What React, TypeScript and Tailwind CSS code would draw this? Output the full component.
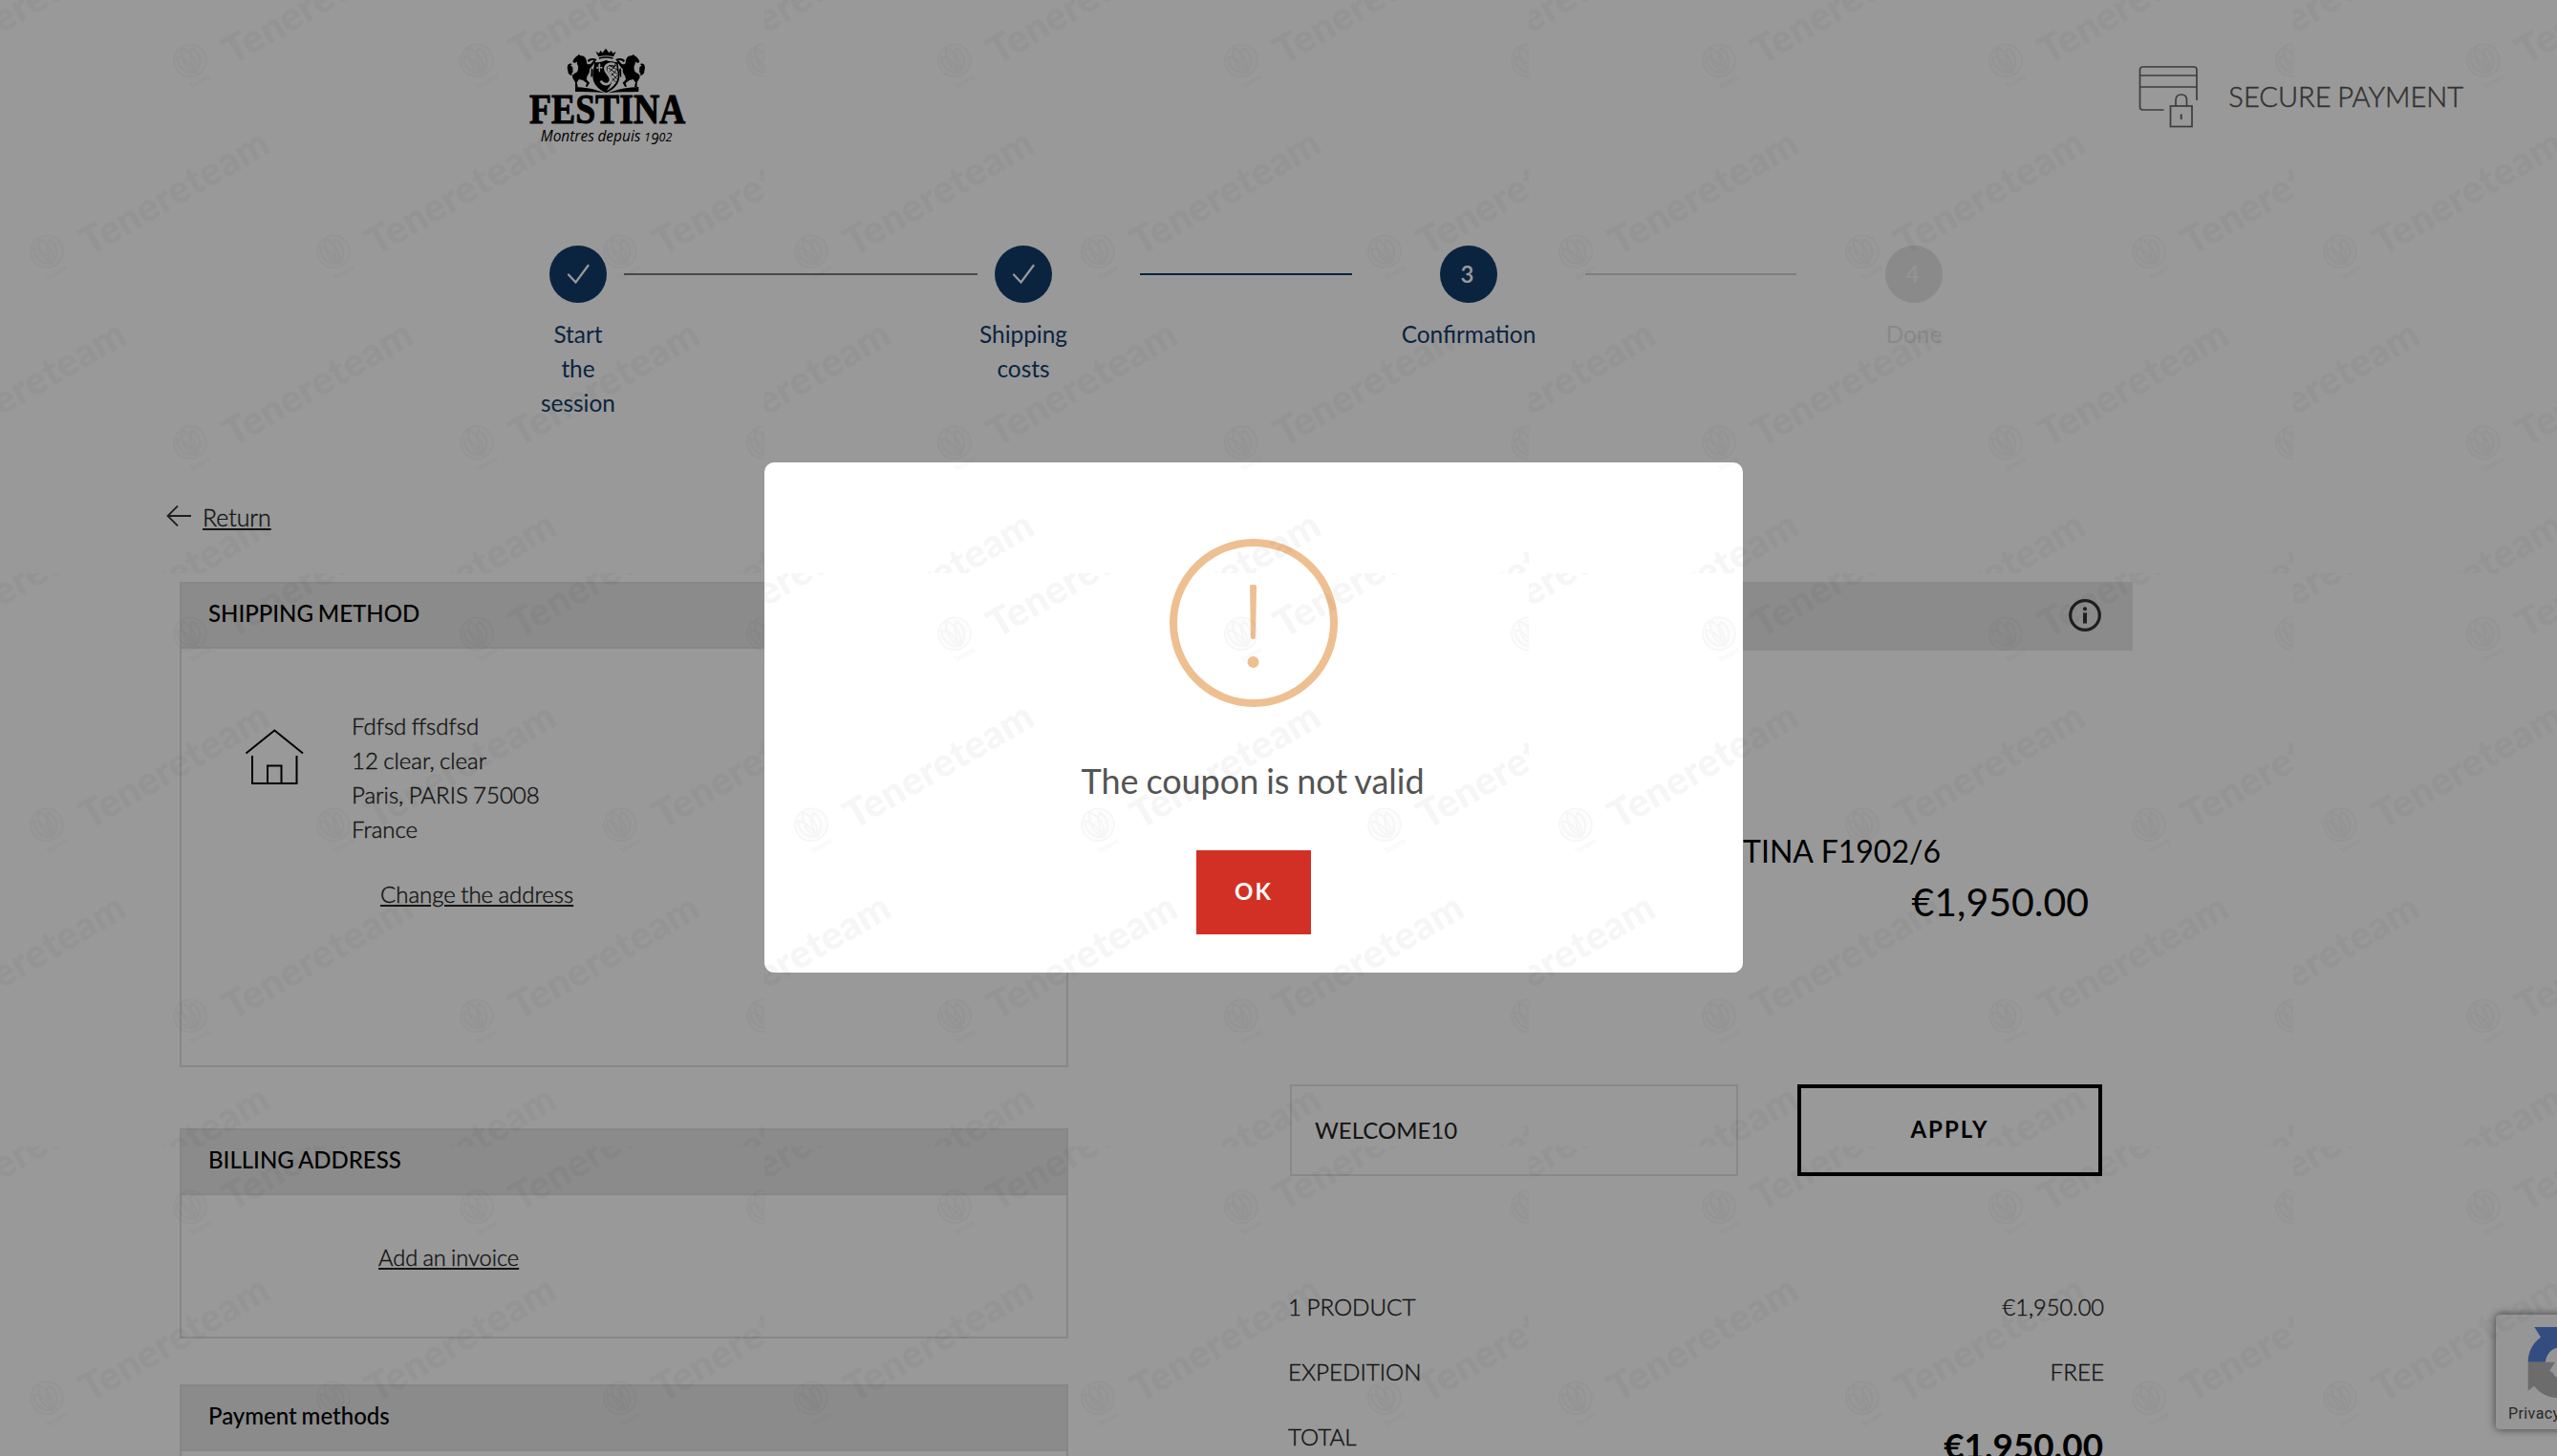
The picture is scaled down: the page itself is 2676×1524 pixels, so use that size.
import type { ReactNode } from 'react';

function Horse() {
  return (
    <g fill="#000">
      <path d="M318 80 l5 5 c8 -1 14 3 17 9 c3 6 2 11 4 16 c5 4 12 2 16 -4 l6 -8 l5 3 l-9 14 c-3 6 -7 9 -10 11 c1 9 -2 16 -7 22 l-3 10 c3 5 7 8 10 12 l-7 12 l-6 0 l4 -11 l-12 -9 l-12 -3 l-7 10 l3 14 l-8 0 l0 -14 l-7 -12 c-4 -6 -2 -12 3 -15 l10 -6 c3 -6 4 -12 3 -19 c-3 -4 -4 -8 -3 -13 l-9 4 l-5 -4 l2 -6 c5 -7 9 -12 15 -14 z" />
      <path d="M284 114 c4 -6 11 -6 15 -1 c-4 -1 -6 1 -6 4 c6 1 8 7 6 12 c2 5 0 10 -4 14 l4 4 l-7 -1 c-6 -4 -9 -9 -8 -15 c-3 -6 -2 -12 0 -17 z" />
      <path d="M345 100 C352 92 362 91 374 96 L372 101 C362 97 355 99 349 106 Z" />
      <path d="M357 124 l6 4 l-2 22 l-5 2 z" />
    </g>
  );
}

function FestinaLogo() {
  return (
    <svg viewBox="160 60 500 310" className="h-[103.3px] w-[166.7px] overflow-visible">
      <path
        d="M371 72 L382 77 L386 69 L393 76 L403 62 L413 76 L420 69 L425 77 L435 72 L427 88 C411 84 396 84 380 88 Z M381 91 C396 87 411 87 426 91 L425 95 C411 91 396 91 382 95 Z"
        fill="#000"
      />
      <Horse />
      <g transform="translate(808 0) scale(-1 1)">
        <Horse />
      </g>
      <path
        d="M366 104 C380 108 392 104 404 99 C416 104 428 108 442 104 C440 118 445 128 446 146 C447 172 430 190 404 202 C378 190 361 172 362 146 C363 128 368 118 366 104 Z"
        fill="#000"
      />
      <path
        d="M408 110 H437 C436 124 441 132 441 146 C441 168 428 182 405 195 C414 184 424 172 421 158 C418 144 404 138 408 126 Z"
        fill="#fff"
      />
      <path d="M414 116 L438 128 M412 124 L438 142 M420 140 L438 158 M424 156 L434 168 M438 112 L414 136 M440 126 L420 148 M440 146 L424 164" stroke="#000" strokeWidth="2.5" />
      <path
        d="M433 114 C416 104 396 112 397 128 C398 142 416 146 414 160 C413 172 398 176 388 164"
        fill="none"
        stroke="#000"
        strokeWidth="15"
      />
      <path
        d="M431 113 C416 106 400 113 401 127 C402 141 420 146 418 161 C416 177 397 180 387 164"
        fill="none"
        stroke="#fff"
        strokeWidth="8"
      />
      <path d="M383 108 C388 113 386 118 384 121 L392 119 V126 L385 124 L385 136 H381 L381 124 L374 126 V119 L381 121 C379 118 379 113 383 108 Z" fill="#fff" />
      <path d="M307 183 C335 184 364 188 400 202 C366 198 335 199 307 198 Z M506 183 C476 184 446 188 410 202 C446 198 476 199 506 198 Z" fill="#000" />
      <text
        x="163"
        y="297"
        textLength="490"
        lengthAdjust="spacingAndGlyphs"
        className="font-['Liberation_Serif'] font-bold"
        fontSize="133"
        stroke="#000"
        strokeWidth="3"
      >
        FESTINA
      </text>
      <text x="198" y="354" textLength="413" lengthAdjust="spacingAndGlyphs" className="font-['Open_Sans'] italic" fontSize="47">
        Montres depuis <tspan fontSize="38">1</tspan>
        <tspan dy="9">9</tspan>
        <tspan dy="-9" fontSize="38">
          02
        </tspan>
      </text>
    </svg>
  );
}

function SecureIcon() {
  return (
    <svg viewBox="0 0 64 66" className="h-[66px] w-[64px]" fill="none" stroke="#666" strokeWidth="1.7">
      <path d="M26.500 47 H4.500 Q1.500 47 1.500 44 V5 Q1.500 2 4.500 2 H58 Q61 2 61 5 V37" />
      <path d="M1.500 11 H61 M1.500 23 H61" />
      <rect x="33.500" y="43" width="22.500" height="21.500" />
      <path d="M39 43 V37 Q39 31 44.700 31 Q50.500 31 50.500 37 V43" />
      <path d="M44.700 51.500 V57" strokeWidth="2" />
    </svg>
  );
}

function Check() {
  return (
    <svg viewBox="0 0 24 22" className="h-[22px] w-[24px]" fill="none" stroke="#fff" strokeWidth="2.2" strokeLinecap="round">
      <path d="M2 11.500 L9.500 19.500 L22.500 2" />
    </svg>
  );
}

const circle = 'flex size-[60px] shrink-0 items-center justify-center rounded-full text-2xl leading-9';

function Steps() {
  return (
    <div>
      <div className="flex items-center pl-[575px]">
        <div className={circle + ' bg-[#123c6b]'}>
          <Check />
        </div>
        <div className="mx-[18px] h-[2px] w-[370px] bg-[#7a7a7a]" />
        <div className={circle + ' bg-[#123c6b]'}>
          <Check />
        </div>
        <div className="mx-[92px] h-[2px] w-[222px] bg-[#123c6b]" />
        <div className={circle + ' bg-[#123c6b] pr-[3px] font-semibold text-white'}>3</div>
        <div className="mr-[93px] ml-[92px] h-[2px] w-[221px] bg-[#d2d2d2]" />
        <div className={circle + ' bg-[#e6e6e6] pr-[3px] font-semibold text-[#f6f6f6]'}>4</div>
      </div>
      <div className="mt-[15px] ml-[372px] grid w-[1864px] grid-cols-4 text-center text-[24.4px] leading-9 text-[#123c6b]">
        <p>
          Start
          <br />
          the
          <br />
          session
        </p>
        <p>
          Shipping
          <br />
          costs
        </p>
        <p>Confirmation</p>
        <p className="text-[#e4e4e4]">Done</p>
      </div>
    </div>
  );
}

function PanelTitle({ children }: { children: ReactNode }) {
  return <h2 className="h-[70px] border-2 border-[#e2e2e2] bg-[#e8e8e8] pt-[13px] pl-[28px] text-2xl leading-9 font-medium text-black">{children}</h2>;
}

const link = 'underline decoration-2 underline-offset-2';

function LeftColumn() {
  return (
    <div className="w-[930px]">
      <section className="h-[508px] border-2 border-t-0 border-[#e2e2e2]">
        <div className="-mx-[2px]">
          <PanelTitle>SHIPPING METHOD</PanelTitle>
        </div>
        <div className="flex pt-[63px] pl-[66px] text-2xl leading-9 font-light text-[#222]">
          <svg viewBox="0 0 62 60" className="mt-[21px] h-[60px] w-[62px]" fill="none" stroke="#000" strokeWidth="2">
            <path d="M1.500 25.500 L31.300 1.500 L61 25.500" />
            <path d="M8 28 V57 H54.500 V28" />
            <path d="M24 57 V38.500 H38.500 V57" />
          </svg>
          <div className="ml-[50px] [-webkit-text-stroke:0.4px_#222]">
            <p>Fdfsd ffsdfsd</p>
            <p>12 clear, clear</p>
            <p>Paris, PARIS 75008</p>
            <p>France</p>
            <p className="mt-8 ml-[30px]">
              <a className={link}>Change the address</a>
            </p>
          </div>
        </div>
      </section>
      <section className="mt-16 h-[220px] border-2 border-t-0 border-[#e2e2e2]">
        <div className="-mx-[2px]">
          <PanelTitle>BILLING ADDRESS</PanelTitle>
        </div>
        <p className="pt-[47px] pl-[206px] text-[23.6px] leading-9 font-light text-[#222] [-webkit-text-stroke:0.4px_#222]">
          <a className={link}>Add an invoice</a>
        </p>
      </section>
      <section className="mt-12 h-[100px] border-2 border-t-0 border-[#e2e2e2]">
        <div className="-mx-[2px]">
          <PanelTitle>Payment methods</PanelTitle>
        </div>
      </section>
    </div>
  );
}

function SummaryRow({ label, children }: { label: string; children: ReactNode }) {
  return (
    <div className="flex h-9 justify-between pr-[30px] pl-[28px] text-[24.200px] leading-9 font-light text-[#222]">
      <span className="[-webkit-text-stroke:0.4px_#222]">{label}</span>
      {children}
    </div>
  );
}

function RightColumn() {
  return (
    <div className="ml-[202px] w-[912px]">
      <div className="flex h-[72px] items-center justify-end bg-[#e8e8e8] pr-[33px]">
        <svg viewBox="0 0 34 34" className="-mt-[2px] size-[34px]">
          <circle cx="17" cy="17" r="15.300" fill="none" stroke="#333" strokeWidth="3.200" />
          <circle cx="17" cy="10.300" r="2" fill="#333" />
          <rect x="15" y="14.500" width="4" height="11" fill="#333" />
        </svg>
      </div>
      <p className="mt-[186px] pr-[201px] text-right text-[32px] leading-[48px] text-black [word-spacing:0.5px]">FESTINA F1902/6</p>
      <p className="mt-[5px] pr-[46px] text-right text-[41px] leading-[48px] text-black">€1,950.00</p>
      <div className="mt-[48px] ml-[106px] h-[2px] w-[18px] bg-[#999]" />
      <div className="mt-[117px] flex pl-[30px]">
        <div className="h-[96px] w-[469px] border-2 border-[#e2e6e8] pt-[28px] pl-[24px] text-2xl leading-9 text-[#222]">WELCOME10</div>
        <button className="ml-[62px] h-[96px] w-[319px] border-4 border-black pb-[2px] text-2xl font-bold tracking-[2px] text-black">APPLY</button>
      </div>
      <div className="mt-[119px] flex flex-col gap-8">
        <SummaryRow label="1 PRODUCT">
          <span className="text-[23.600px] [-webkit-text-stroke:0.4px_#222]">€1,950.00</span>
        </SummaryRow>
        <SummaryRow label="EXPEDITION">
          <span className="[-webkit-text-stroke:0.4px_#222]">FREE</span>
        </SummaryRow>
        <SummaryRow label="TOTAL">
          <span className="mt-[5px] mr-px text-[36.800px] leading-[44px] font-bold text-black">€1,950.00</span>
        </SummaryRow>
      </div>
    </div>
  );
}

function Recaptcha() {
  return (
    <div className="absolute top-[1376px] left-[2612px] h-[120px] w-[140px] rounded-[4px] bg-[#fbfbfb] shadow-[0_0_10px_rgba(0,0,0,0.6)]">
      <svg viewBox="255 115 97 230" className="mt-[12px] ml-[33px] h-[76.700px] w-[32.300px]">
        <path d="M257 228 C257 196 272 168 297 150 L277 118 H352 V183 C332 184 314 204 312 228 Z" fill="#5580d8" />
        <path d="M257 228 H352 V340 C320 340 294 326 276 303 L257 318 Z" fill="#b4b4b4" />
        <path d="M352 184 C340 186 344 200 338 210 L330 216 L342 228 L325 256 L335 262 C340 272 346 276 352 278 Z" fill="#fbfbfb" />
      </svg>
      <p className="mt-[5px] ml-[13px] font-['Roboto'] text-[16px] leading-5 tracking-[0.400px] whitespace-nowrap text-[#444]">Privacy - Terms</p>
    </div>
  );
}

function Modal() {
  return (
    <div className="absolute top-[484px] left-[800px] flex h-[534px] w-[1024px] flex-col items-center rounded-[10px] bg-white pt-[80px]">
      <svg viewBox="0 0 176 176" className="size-[176px]">
        <circle cx="88" cy="88" r="84" fill="none" stroke="#eebf90" strokeWidth="8" />
        <path d="M84 50 Q84 48 86 48 H89 Q91 48 91 50 L90 103 Q90 105 88 105 H87 Q85 105 85 103 Z" fill="#eebf90" />
        <circle cx="87.500" cy="129" r="6" fill="#eebf90" />
      </svg>
      <h1 className="mt-[49px] -ml-[2px] text-[36px] leading-[56px] tracking-[-0.040px] text-[#545454]">The coupon is not valid</h1>
      <button className="mt-[45px] h-[88px] w-[120px] bg-[#d33025] pb-[2px] text-2xl font-bold tracking-[2px] text-white">OK</button>
    </div>
  );
}

const marks = [
  [200, 65],
  [500, 65],
  [800, 65],
  [-100, 65],
  [50, 265],
  [350, 265],
  [650, 265],
  [200, 465],
  [500, 465],
  [800, 465],
  [-100, 465],
  [50, 665],
  [350, 665],
  [650, 665],
];

function Watermark() {
  return (
    <svg className="pointer-events-none absolute inset-0 h-full w-full" aria-hidden="true">
      <defs>
        <pattern id="tenere" width="800" height="600" patternUnits="userSpaceOnUse">
          {marks.map(([x, y], i) => (
            <g key={i} transform={`translate(${x} ${y}) rotate(-30)`} opacity="0.034">
              <circle cx="0" cy="-2" r="17" fill="#000" fillOpacity="0.2" stroke="#000" strokeWidth="1.500" />
              <path d="M-1 12 C-14 6 -14 -6 -10 -12 C-4 -8 -2 -2 -1 12 C0 -2 2 -8 8 -12 C12 -6 12 6 -1 12 M-1 -18 C-8 -8 -8 4 -1 12 C6 4 6 -8 -1 -18" fill="none" stroke="#000" strokeWidth="2" />
              <text x="-14" y="25" fontSize="8" fontWeight="700" className="font-['Lato']">
                Tenere
              </text>
              <text x="36" y="25" textLength="221" fontSize="41" fontWeight="900" className="font-['Lato']">
                Tenereteam
              </text>
            </g>
          ))}
        </pattern>
      </defs>
      <rect width="100%" height="100%" fill="url(#tenere)" />
    </svg>
  );
}

export default function App() {
  return (
    <div className="relative h-[1524px] w-[2676px] overflow-hidden bg-white font-['Lato',sans-serif] [word-spacing:-0.075em]">
      <header className="flex h-[257px] items-start pl-[553px]">
        <div className="mt-[50px]">
          <FestinaLogo />
        </div>
        <div className="mt-[68px] ml-auto flex pr-[98px]">
          <SecureIcon />
          <p className="mt-[15px] ml-[30px] text-[29.050px] leading-9 font-light text-[#555] [-webkit-text-stroke:0.500px_#555]">SECURE PAYMENT</p>
        </div>
      </header>
      <Steps />
      <div className="mt-[84px] flex items-center pl-[174px] text-[24.800px] leading-9 font-light text-[#222]">
        <svg viewBox="0 0 26 22" className="-mt-[4px] mr-[12px] h-[22px] w-[26px]" fill="none" stroke="#333" strokeWidth="1.800">
          <path d="M26 11 H1.500 M12 0.500 L1.500 11 L12 21.500" />
        </svg>
        <a className={link + ' [-webkit-text-stroke:0.4px_#222]'}>Return</a>
      </div>
      <main className="mt-[49px] flex pl-[188px]">
        <LeftColumn />
        <RightColumn />
      </main>
      <Recaptcha />
      <div className="absolute inset-0 bg-black/40" />
      <Modal />
      <Watermark />
    </div>
  );
}
